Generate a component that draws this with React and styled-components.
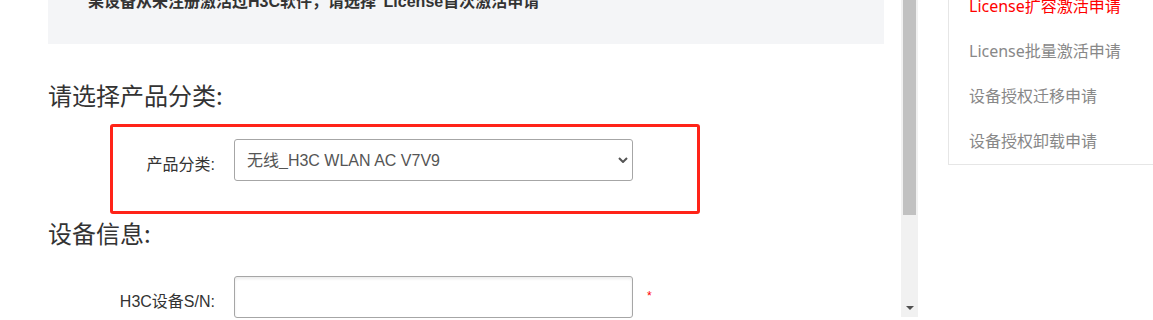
import React from "react";
import styled, { createGlobalStyle } from "styled-components";

const GlobalStyle = createGlobalStyle`
  html, body {
    margin: 0;
    padding: 0;
    background: #fff;
    overflow: hidden;
  }
  body {
    font-family: "Liberation Sans", "Noto Sans CJK SC", sans-serif;
    color: #333;
  }
`;

const SPage = styled.div`
  display: flex;
  align-items: flex-start;
  height: 320px;
  overflow: hidden;
`;

const SMainPane = styled.div`
  width: 901px;
  flex-shrink: 0;
  height: 320px;
  overflow: hidden;
`;

const SContent = styled.div`
  padding: 0 17px 0 48px;
`;

const SBanner = styled.div`
  margin-top: -10px;
  padding: 0 40px 30px;
  background: #f4f5f7;
  font-size: 16px;
  font-weight: bold;
  line-height: 24px;
  color: #333;
  white-space: nowrap;
`;

const SHeading = styled.h3`
  margin: ${({ $top }) => $top}px 0 0;
  font-family: "Noto Sans CJK SC", "Liberation Sans", sans-serif;
  font-size: 24px;
  font-weight: 400;
  line-height: 34px;
  color: #333;
`;

const SHighlightBox = styled.div`
  margin: 12px 0 0 62px;
  width: 584px;
  padding: 12px 0 30px;
  border: 3px solid #ff2318;
  border-radius: 3px;
`;

const SFieldRow = styled.div`
  display: grid;
  grid-template-columns: ${({ $labelWidth }) => $labelWidth}px 399px auto;
  align-items: start;
  margin-top: ${({ $top }) => $top || 0}px;
`;

const SLabel = styled.label`
  padding: 15px 19px 0 0;
  text-align: right;
  font-size: 16px;
  line-height: 22px;
  color: #333;
  white-space: nowrap;
`;

const SSelectWrap = styled.div`
  position: relative;
`;

const SSelect = styled.select`
  appearance: none;
  width: 100%;
  height: 42px;
  padding: 0 30px 0 12px;
  border: 1px solid #a6a6a6;
  border-radius: 3px;
  background: #fff;
  font-family: "Liberation Sans", "Noto Sans CJK SC", sans-serif;
  font-size: 16px;
  color: #555;
  outline: none;
`;

const SChevron = styled.svg`
  position: absolute;
  right: 5px;
  top: 18px;
  pointer-events: none;
`;

const SInput = styled.input`
  box-sizing: border-box;
  width: 100%;
  height: 42px;
  padding: 0 12px;
  border: 1px solid #a6a6a6;
  border-radius: 3px;
  box-shadow: inset 0 2px 3px rgba(0, 0, 0, 0.08);
  font-size: 16px;
  outline: none;
`;

const SRequired = styled.span`
  margin: 13px 0 0 14px;
  font-size: 12px;
  line-height: 14px;
  color: #f00;
`;

const SScrollTrack = styled.div`
  width: 17px;
  height: 317px;
  flex-shrink: 0;
  display: flex;
  flex-direction: column;
  align-items: center;
  background: #f1f1f1;
`;

const SScrollThumb = styled.div`
  width: 13px;
  height: 215px;
  background: #c1c1c1;
`;

const SScrollArrow = styled.div`
  margin-top: auto;
  margin-bottom: 7px;
  width: 0;
  height: 0;
  border-left: 4px solid transparent;
  border-right: 4px solid transparent;
  border-top: 4px solid #505050;
`;

const SSideNav = styled.ul`
  flex: 1;
  margin: -16px 0 0 30px;
  padding: 0;
  list-style: none;
  border-left: 1px solid #e6e6e6;
  border-bottom: 1px solid #e6e6e6;
`;

const SNavItem = styled.li`
  height: 45px;
  padding-left: 20px;
  font-family: "Noto Sans", "Noto Sans CJK SC", sans-serif;
  font-size: 16px;
  line-height: 45px;
  color: ${({ $active }) => ($active ? "#f00" : "#888")};
  white-space: nowrap;
`;

const navItems = [
  { label: "License扩容激活申请", active: true },
  { label: "License批量激活申请" },
  { label: "设备授权迁移申请" },
  { label: "设备授权卸载申请" },
];

const App = () => (
  <>
    <GlobalStyle />
    <SPage>
      <SMainPane>
        <SContent>
          <SBanner>果设备从未注册激活过H3C软件，请选择"License首次激活申请"</SBanner>

          <SHeading $top={34}>请选择产品分类:</SHeading>
          <SHighlightBox>
            <SFieldRow $labelWidth={121}>
              <SLabel>产品分类:</SLabel>
              <SSelectWrap>
                <SSelect defaultValue="ac">
                  <option value="ac">无线_H3C WLAN AC V7V9</option>
                </SSelect>
                <SChevron width="10" height="6" viewBox="0 0 10 6">
                  <path d="M1 1l4 4 4-4" fill="none" stroke="#555" strokeWidth="2" />
                </SChevron>
              </SSelectWrap>
            </SFieldRow>
          </SHighlightBox>

          <SHeading $top={2}>设备信息:</SHeading>
          <SFieldRow $labelWidth={186} $top={26}>
            <SLabel>H3C设备S/N:</SLabel>
            <SInput type="text" />
            <SRequired>*</SRequired>
          </SFieldRow>
        </SContent>
      </SMainPane>

      <SScrollTrack>
        <SScrollThumb />
        <SScrollArrow />
      </SScrollTrack>

      <SSideNav>
        {navItems.map((item) => (
          <SNavItem key={item.label} $active={item.active}>
            {item.label}
          </SNavItem>
        ))}
      </SSideNav>
    </SPage>
  </>
);

export default App;
